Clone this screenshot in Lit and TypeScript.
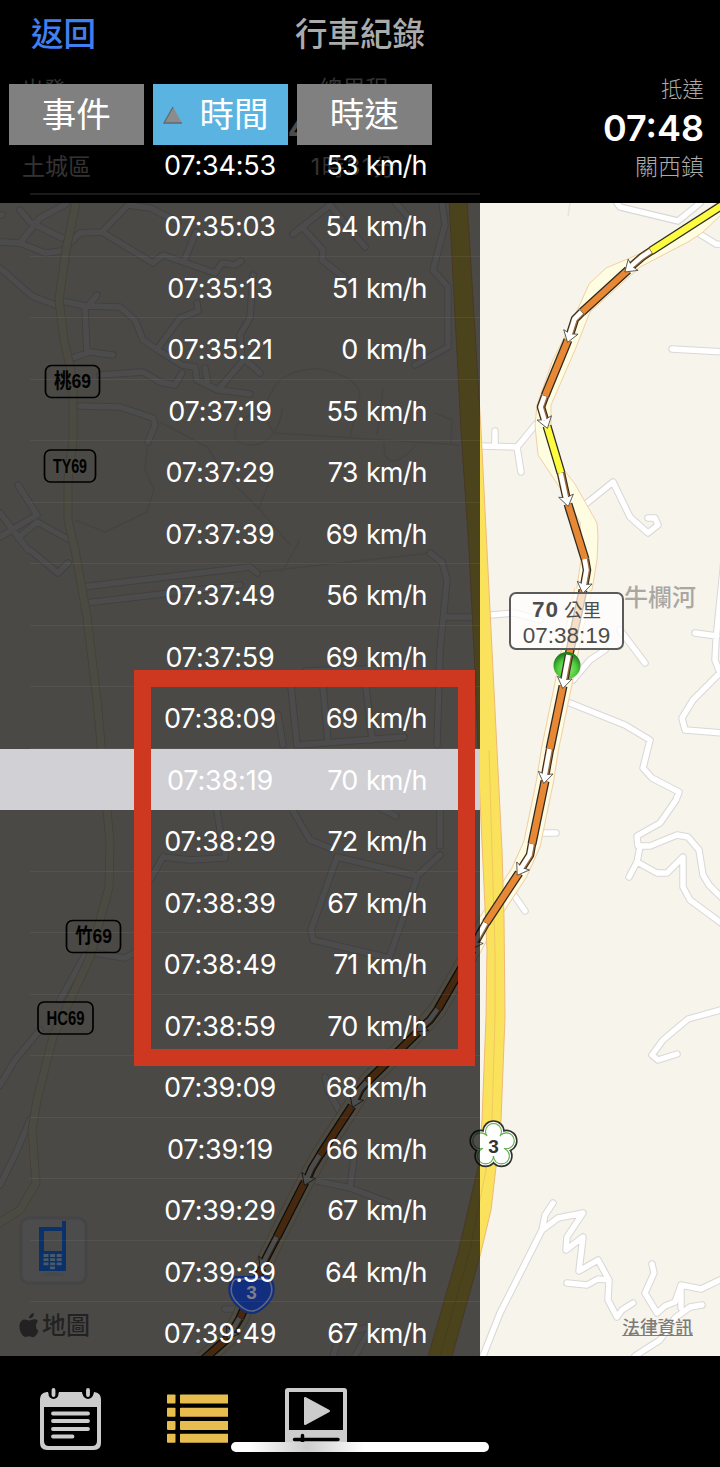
import { LitElement, html, svg, css } from 'lit';
import { customElement, property } from 'lit/decorators.js';
import { classMap } from 'lit/directives/class-map.js';

type Point = [number, number];

const SAMPLES = [
  { time: '07:34:53', speed: 53 },
  { time: '07:35:03', speed: 54 },
  { time: '07:35:13', speed: 51 },
  { time: '07:35:21', speed: 0 },
  { time: '07:37:19', speed: 55 },
  { time: '07:37:29', speed: 73 },
  { time: '07:37:39', speed: 69 },
  { time: '07:37:49', speed: 56 },
  { time: '07:37:59', speed: 69 },
  { time: '07:38:09', speed: 69 },
  { time: '07:38:19', speed: 70 },
  { time: '07:38:29', speed: 72 },
  { time: '07:38:39', speed: 67 },
  { time: '07:38:49', speed: 71 },
  { time: '07:38:59', speed: 70 },
  { time: '07:39:09', speed: 68 },
  { time: '07:39:19', speed: 66 },
  { time: '07:39:29', speed: 67 },
  { time: '07:39:39', speed: 64 },
  { time: '07:39:49', speed: 67 },
];

const STREETS = [
  'M0 242L20 243 45 253 62 251 80 233 102 232 153 263 163 255 215 273 222 263 235 265 241 261',
  'M102 232L128 205 150 208 178 222M196 232L185 259',
  'M20 210L30 222 62 238M66 204L40 218 20 243M0 215H2',
  'M0 268L32 296 58 306',
  'M62 301L85 306 120 307 135 320 143 340 158 350 182 365 195 367 197 380 218 390 235 392 250 394',
  'M88 306L97 295M85 307L87 352M72 358L90 352 113 355',
  'M158 348L180 318 198 311 197 303',
  'M253 275L250 318 240 335 242 357 260 373M242 362L218 390M205 368L208 384',
  'M100 375L143 372 160 382 175 385 182 373',
  'M80 406L120 407 153 418 155 425 148 442',
  'M293 234L330 205 365 247M303 228L323 250 322 260 345 278M396 203L415 225',
  'M442 203L445 225 433 270 448 287 448 347 415 365',
  'M18 485L37 515 0 537M18 538L37 522 70 540M0 513L28 550',
  'M30 550L58 573 68 563',
  'M82 587L250 567 257 573M85 603L240 585',
  'M430 553L442 562 447 580 440 650 437 745M447 617H472',
  'M291 687L297 745M323 687L328 742M366 687L372 740M297 745L404 737M278 715L283 745M306 671L400 668',
  'M293 811L310 840 330 848M380 808L396 816M440 770V846M217 811L222 842',
  'M150 880L163 857 190 860 225 858V845',
  'M337 857L417 876 440 855M337 857L311 930 313 940 389 958 417 878',
  'M95 953L125 958 140 950M85 955L60 1000M40 1030L15 1060 0 1085',
  'M325 1077L328 1090 340 1112',
  'M30 1120L15 1155 0 1185',
  'M313 1180L350 1188 390 1203M350 1188L355 1150M333 1356L340 1335 365 1328M355 1356L370 1330M225 1309H245',
  'M617 203L620 207 678 221 700 203M698 233L716 244 724 245M672 349L724 352',
  'M480 446L517 447 523 440 536 424M495 431V446M517 447L521 472',
  'M587 503L613 482 630 517 648 533 658 525 655 518 648 518',
  'M490 615L515 613 540 620M620 630L645 663M573 680L590 660 605 650',
  'M570 703L625 725 650 740 643 768 652 778 679 792 676 800 660 823 637 836 638 846 650 846 677 835 688 837 699 850 703 875 709 885 724 900',
  'M640 847L637 862 629 877M637 862L657 873 667 873 683 857 683 887 690 900 724 925',
  'M695 633L717 636M724 560L716 640 715 660 720 673 693 700 682 718 685 730 724 733',
  'M542 833H556M514 895L525 911',
  'M724 1009L688 1019 663 1040 652 1055 658 1060 677 1054',
  'M483 1356L500 1313 542 1230 558 1218 583 1213 567 1237 566 1250 583 1237 579 1271 598 1260 609 1280 608 1300 617 1317 622 1310 633 1303',
  'M542 1230L545 1215 553 1203M567 1283L587 1285 598 1279 609 1280',
  'M652 1264L654 1273 645 1293 657 1313 665 1306 675 1302 681 1285 686 1286 701 1289 724 1278M702 1305L690 1307 675 1318 660 1340 635 1356M681 1285V1308',
].join('');

const BOUNDARIES =
  'M160 422L207 447 225 475 260 510 290 545M275 433C262 420 262 400 280 380Q300 366 325 370 358 378 360 395L350 437M275 433L460 445M383 388L377 435M282 408Q282 425 268 440 250 450 236 440 230 425 250 415M148 442L145 470 154 490 147 512 105 532 75 520M384 443Q383 465 398 460 412 452 415 445M274 470L258 510M258 572L430 553M282 572L300 540M570 203L568 216M435 413L452 420 451 445';

const RURAL_ROAD: Point[] = [
  [76, 203], [66, 250], [59, 300], [64, 340], [73, 380], [73, 440], [68, 480], [68, 520],
  [75, 550], [87, 617], [97, 700], [110, 843], [109, 887], [90, 957], [53, 1037], [37, 1100],
  [32, 1130], [36, 1183], [20, 1210], [-4, 1225],
];

const HIGHWAY =
  'M449 200L461 430 469 550 475 670 480 800 487 950 486 1017 482 1120 478 1167 458 1253 427 1360 451 1360 480 1256 491 1210 496 1167 501 1120 505 1017 504 917 502 850 497 750 487 550 481 430 467 200Z';

const LANE = 'M489 750L495 950 495 1017 492 1120 486 1170 470 1250 440 1356';

const SHOULDER =
  'M724 198L651 249 606 268 589 284 572 322 552 362 537 405 535 425 538 455 560 488 580 522 581 560 575 600 592 590 597 560 598 537 597 523 575 484 560 465 551 425 551 405 575 350 590 312 640 267 688 242 702 233 724 212Z';

// legs driven at constant colour, then the white direction arrows between them
const LEGS: { tone: string; points: Point[] }[] = [
  { tone: 'fast', points: [[724, 204], [651, 251]] },
  { tone: 'slow', points: [[628, 270], [582, 312]] },
  { tone: 'slow', points: [[568, 340], [545, 396]] },
  { tone: 'fast', points: [[547, 426], [561, 473]] },
  { tone: 'slow', points: [[568, 504], [585, 559]] },
  { tone: 'slow', points: [[583, 590], [569, 655]] },
  { tone: 'slow', points: [[563, 686], [550, 749]] },
  { tone: 'slow', points: [[545, 781], [532, 844]] },
  { tone: 'slow', points: [[519, 873], [486, 923]] },
  { tone: 'slow', points: [[472, 950], [438, 1009]] },
  { tone: 'slow', points: [[418, 1032], [367, 1082]] },
  { tone: 'slow', points: [[352, 1106], [320, 1155]] },
  { tone: 'slow', points: [[305, 1182], [277, 1237]] },
  { tone: 'slow', points: [[262, 1268], [240, 1318]] },
  { tone: 'slow', points: [[228, 1338], [203, 1360]] },
];

const ARROWS: Point[][] = [
  [[651, 251], [642, 257], [626, 271]],
  [[582, 312], [575, 319], [568, 341]],
  [[545, 396], [541, 407], [547, 427]],
  [[561, 473], [568, 505]],
  [[585, 559], [587, 570], [583, 592]],
  [[569, 655], [563, 687]],
  [[550, 749], [544, 782]],
  [[532, 844], [530, 855], [518, 874]],
  [[486, 923], [472, 948]],
  [[438, 1009], [430, 1020], [417, 1031]],
  [[367, 1082], [360, 1090], [353, 1106]],
  [[320, 1155], [312, 1168], [305, 1184]],
  [[277, 1237], [261, 1268]],
  [[240, 1318], [228, 1338]],
];

const PETALS: Point[] = [-90, -18, 54, 126, 198].map(deg => {
  const rad = deg * Math.PI / 180;
  return [Math.cos(rad) * 13.5, Math.sin(rad) * 13.5];
});

const join = (points: Point[]) => points.map(p => p.join(',')).join(' ');

@customElement('trip-map')
export class TripMap extends LitElement {

  static styles = css`
    :host {
      display: block;
    }
    svg {
      display: block;
      width: 100%;
      height: 100%;
    }
    polyline, path {
      fill: none;
      stroke-linejoin: round;
    }
    .ground { fill: #f7f4ec; }
    .boundary { stroke: #e6e3dc; stroke-width: 1.5; }
    .street-edge { stroke: #dad8d6; stroke-width: 7.5; stroke-linecap: round; }
    .street { stroke: #fff; stroke-width: 5.4; stroke-linecap: round; }
    .rural-edge { stroke: #ecd9b4; stroke-width: 9; }
    .rural { stroke: #fffae0; stroke-width: 7; }
    .shoulder { fill: #fffde1; stroke: #f0cfa6; stroke-width: 1; }
    .shoulder-edge { stroke: #f0cfa6; stroke-width: 18; }
    .shoulder-line { stroke: #fffbe2; stroke-width: 16; }
    .highway { fill: #fae25d; stroke: #efb978; stroke-width: 1; }
    .lane { stroke: #edc35f; stroke-width: .8; }
    .leg-edge { stroke: #2d2a22; stroke-width: 9; }
    .leg { stroke-width: 6.4; }
    .fast { stroke: #fdfb40; }
    .slow { stroke: #e98834; }
    .tail-edge { stroke: #35291c; stroke-width: 8.5; }
    .tail-side { stroke: #9a6b3c; stroke-width: 6.4; }
    .tail { stroke: #fff; stroke-width: 4.6; }
    .head { fill: #fff; stroke: #444; stroke-width: .8; }
    .place { font: 500 24px "Noto Sans CJK TC", sans-serif; fill: #a9a7a3; }
    .road-sign { fill: none; stroke: #000; stroke-width: 1.7; }
    .road-name { font: 700 20px "Liberation Sans", "Noto Sans CJK TC", sans-serif; fill: #000; }
    .flower-edge { fill: #2e302e; }
    .flower-fill { fill: #fff; }
    .flower-line { fill: #5aaa45; }
    .route-no { font: 700 19px "Liberation Sans", sans-serif; fill: #333; text-anchor: middle; }
  `;

  renderArrow(points: Point[]) {
    const [tx, ty] = points[points.length - 1];
    const [px, py] = points[points.length - 2];
    const angle = Math.atan2(ty - py, tx - px) * 180 / Math.PI;
    const length = Math.hypot(tx - px, ty - py);
    // the tail stops short of the tip so that its dark edge stays behind the head
    const neck: Point = [tx - (tx - px) / length * 7, ty - (ty - py) / length * 7];
    const tail = join([...points.slice(0, -1), neck]);
    return svg`
      <polyline class="tail-edge" points=${tail} />
      <polyline class="tail-side" points=${tail} />
      <path class="head" d="M1.500 0L-9.500 -7.500 -7.500 0 -9.500 7.500Z" transform="translate(${tx} ${ty}) rotate(${angle})" />
      <polyline class="tail" points=${tail} transform="translate(-.5 0)" />
    `;
  }

  renderSign(x: number, y: number, width: number, text: string) {
    return svg`
      <rect class="road-sign" x=${x} y=${y} width=${width} height="32" rx="6" />
      <text class="road-name" x=${x + 8.5} y=${y + 22.7} textLength=${width - 17} lengthAdjust="spacingAndGlyphs">${text}</text>
    `;
  }

  renderPetals(name: string, radius: number) {
    return PETALS.map(([x, y]) => svg`<circle class=${name} cx=${x} cy=${y} r=${radius} />`);
  }

  render() {
    const track = join(LEGS.slice(5).flatMap(leg => leg.points));
    return html`
      <svg viewBox="0 203 720 1153" preserveAspectRatio="none">
        <rect class="ground" x="0" y="203" width="720" height="1153" />
        <path class="boundary" d=${BOUNDARIES} />
        <path class="street-edge" d=${STREETS} />
        <path class="street" d=${STREETS} />
        <polyline class="rural-edge" points=${join(RURAL_ROAD)} />
        <polyline class="rural" points=${join(RURAL_ROAD)} />
        <polyline class="shoulder-edge" points=${track} />
        <path class="shoulder" d=${SHOULDER} />
        <polyline class="shoulder-line" points=${track} />
        <path class="highway" d=${HIGHWAY} />
        <path class="lane" d=${LANE} />
        <text class="place" x="624" y="606">牛欄河</text>
        <defs>
          <radialGradient id="ball" cx=".5" cy=".65" r=".6">
            <stop offset="0" stop-color="#8ff07a" />
            <stop offset=".6" stop-color="#4fca3e" />
            <stop offset="1" stop-color="#1d7d1c" />
          </radialGradient>
        </defs>
        ${LEGS.map(leg => svg`
          <polyline class="leg-edge" points=${join(leg.points)} />
          <polyline class="leg ${leg.tone}" points=${join(leg.points)} />
        `)}
        <circle cx="567" cy="665.500" r="13.500" fill="url(#ball)" />
        ${ARROWS.map(points => this.renderArrow(points))}
        ${this.renderSign(45.5, 365.5, 54, '桃69')}
        ${this.renderSign(44.5, 450, 51, 'TY69')}
        ${this.renderSign(66.5, 920.5, 54, '竹69')}
        ${this.renderSign(38, 1002, 55, 'HC69')}
        <g transform="translate(493.500 1145)">
          ${this.renderPetals('flower-edge', 11.3)}
          ${this.renderPetals('flower-fill', 9.7)}
          ${this.renderPetals('flower-line', 8.5)}
          ${this.renderPetals('flower-fill', 7.4)}
          <circle class="flower-fill" r="11" />
          <text class="route-no" y="7.500">3</text>
        </g>
      </svg>
    `;
  }
}

// landmarks that stay readable through the translucent sample list
@customElement('map-landmarks')
export class MapLandmarks extends LitElement {

  static styles = css`
    :host {
      display: block;
    }
    svg {
      display: block;
      width: 100%;
      height: 100%;
    }
    .button { fill: #4d4c4c; stroke: #454547; stroke-width: 3; }
    .phone { fill: #0a3169; }
    .screen { fill: #4b4a4a; }
    .keys { stroke: #4a5a6a; stroke-width: 2.8; stroke-dasharray: 5 1.6; fill: none; }
    .glow { fill: #46494d; }
    .shield { fill: #122e7e; }
    .shield-line { fill: none; stroke: #5f6680; stroke-width: 1.6; }
    .route-no { font: 700 19px "Liberation Sans", sans-serif; fill: #7c7f8a; text-anchor: middle; }
    .apple { fill: #232222; }
    .brand { font: 500 24px "Noto Sans CJK TC", sans-serif; fill: #232222; }
  `;

  render() {
    return html`
      <svg viewBox="0 1200 480 156">
        <rect class="button" x="21" y="1218" width="65" height="65" rx="8" />
        <path class="phone" d="M39 1227H62V1221H66V1271H39Z" />
        <rect class="screen" x="44" y="1231" width="18" height="20" />
        <path class="keys" d="M43.500 1255.500H62M43.500 1259.700H62M43.500 1263.900H62M50 1267.800H55" />
        <path class="glow" d="M39 1276Q46 1272 52 1272T66 1276Z" />
        <g transform="translate(251.500 1294)">
          <path class="shield" d="M-15 -18H15Q20 -18 22 -12 26 0 17 10 8 20 0 20 -8 20 -17 10 -26 0 -22 -12 -20 -18 -15 -18Z" />
          <path class="shield-line" d="M-14 -15H14Q18 -15 19 -11 23 -1 15 8 7 17 0 17 -7 17 -15 8 -23 -1 -19 -11 -18 -15 -14 -15Z" />
          <text class="route-no" y="5">3</text>
        </g>
        <path class="apple" d="M29 1318.500Q29 1314 34 1313 34 1318 29 1318.500ZM29 1320.500C32 1320.500 35 1317.500 38 1321Q33.500 1326.500 38.500 1331 35.500 1338 32 1337 29 1335.500 26 1337C21.500 1337.500 17.500 1327 20.500 1322 24 1317.500 27 1320.500 29 1320.500Z" />
        <text class="brand" x="42" y="1334">地圖</text>
      </svg>
    `;
  }
}

@customElement('sample-row')
export class SampleRow extends LitElement {

  @property() time = '';
  @property({ type: Number }) speed = 0;

  static styles = css`
    :host {
      display: block;
    }
    .row {
      display: flex;
      align-items: center;
      box-sizing: border-box;
      height: 61.53px;
      padding-top: 1.5px;
      color: #fff;
      font: 27px/1 Inter, sans-serif;
      white-space: nowrap;
    }
    .time {
      width: 132px;
      margin-left: 154px;
      text-align: center;
      letter-spacing: -.2px;
    }
    .speed {
      width: 140.5px;
      text-align: right;
      letter-spacing: -.9px;
      word-spacing: 1.8px;
    }
  `;

  render() {
    return html`
      <div class="row">
        <span class="time">${this.time}</span>
        <span class="speed">${this.speed} km/h</span>
      </div>
    `;
  }
}

@customElement('app-root')
export class AppRoot extends LitElement {

  @property() selected = '07:38:19';
  @property() sortBy = '時間';

  static styles = css`
    :host {
      display: block;
      font-family: Inter, "Noto Sans CJK TC", sans-serif;
    }
    .screen {
      position: relative;
      display: flex;
      flex-direction: column;
      width: 720px;
      height: 1467px;
      overflow: hidden;
      background: #000;
    }
    .header {
      height: 203px;
      color: #ababab;
    }
    .nav {
      display: grid;
      grid-template-columns: 1fr auto 1fr;
      align-items: center;
      box-sizing: border-box;
      height: 68px;
      padding: 2px 31px 0;
      font-size: 32.5px;
      font-weight: 500;
      line-height: 1;
    }
    .back {
      color: #427fee;
    }
    .summary {
      display: grid;
      grid-template-columns: 252px 160px 1fr;
      padding: 9px 16px 0 22px;
      font-size: 23px;
    }
    .stop {
      display: flex;
      flex-direction: column;
    }
    .stop span {
      height: 24px;
      line-height: 24px;
    }
    .stop .small {
      font-size: 21.5px;
    }
    .middle {
      align-items: center;
    }
    .end {
      align-items: flex-end;
      font-weight: 300;
    }
    .stop .figure {
      height: 54px;
      color: #fff;
      font-size: 36px;
      font-weight: 600;
      line-height: 54px;
      white-space: nowrap;
    }
    .stop .spell {
      letter-spacing: 1.5px;
    }
    .figure small {
      font-size: 22px;
    }
    .map {
      flex: none;
      height: 1153px;
    }
    .shade {
      position: absolute;
      left: 0;
      top: 72px;
      width: 480px;
      height: 1284px;
      background: rgba(0, 0, 0, .7);
    }
    .landmarks {
      position: absolute;
      left: 0;
      top: 1200px;
      width: 480px;
      height: 156px;
    }
    .panel {
      position: absolute;
      left: 0;
      top: 84px;
      width: 480px;
      height: 1272px;
      overflow: hidden;
    }
    .tabs {
      position: relative;
      display: flex;
      gap: 9.5px;
      height: 61px;
      padding-left: 9px;
    }
    .tab {
      display: flex;
      align-items: center;
      justify-content: center;
      box-sizing: border-box;
      width: 134.500px;
      padding-top: 2px;
      background: #808080;
      color: #fff;
      font-size: 34.5px;
      line-height: 1;
    }
    .tab.active {
      justify-content: space-between;
      padding: 2px 19px 0 10px;
      background: #5ab3e0;
    }
    .tab svg {
      width: 20px;
      height: 18px;
      margin-top: -2px;
    }
    .rows {
      margin-top: -11.5px;
    }
    .entry {
      position: relative;
      height: 61.53px;
    }
    .entry::after {
      content: "";
      position: absolute;
      left: 30px;
      right: 0;
      bottom: 0;
      height: 1px;
      background: rgba(255, 255, 255, .06);
    }
    .entry:first-child::after {
      height: 2px;
      background: rgba(255, 255, 255, .1);
    }
    .entry.selected {
      background: #d1d0d5;
    }
    .entry.selected::after {
      display: none;
    }
    .frame {
      position: absolute;
      left: 133.5px;
      top: 670px;
      box-sizing: border-box;
      width: 341.500px;
      height: 396px;
      border: 17px solid #cf3820;
    }
    .callout {
      position: absolute;
      left: 509px;
      top: 592px;
      display: flex;
      flex-direction: column;
      align-items: center;
      justify-content: center;
      box-sizing: border-box;
      width: 115px;
      height: 58px;
      padding-top: 2px;
      border: 2px solid #5a5a5a;
      border-radius: 7px;
      background: rgba(255, 255, 255, .72);
      color: #4c4c4c;
      font: 22.5px/25px "Liberation Sans", "Noto Sans CJK TC", sans-serif;
    }
    .callout .distance {
      font-size: 18.5px;
    }
    .callout b {
      font: 700 22.5px/25px "Liberation Sans", sans-serif;
      letter-spacing: 1px;
    }
    .legal {
      position: absolute;
      right: 27px;
      top: 1315px;
      color: #7d7b78;
      font-size: 17.7px;
      font-weight: 500;
      line-height: 26px;
      text-decoration: underline;
    }
    .toolbar {
      display: flex;
      gap: 59.5px;
      padding: 31px 0 0 39px;
    }
    .toolbar svg {
      width: 63px;
      height: 64px;
    }
    .toolbar svg.current {
      margin-left: 3px;
      margin-right: -3px;
    }
    .home {
      position: absolute;
      left: 231px;
      top: 1442px;
      width: 258px;
      height: 10px;
      border-radius: 5px;
      background: radial-gradient(circle 58px at 76px 5px, #ccc, #fff);
    }
  `;

  renderTab(label: string) {
    const active = label === this.sortBy;
    return html`
      <div class=${classMap({ tab: true, active })}>
        ${active ? html`
          <svg viewBox="0 0 20 18">
            <path d="M10 1L19 17H1Z" fill="#8c8c8c" />
            <path d="M10 1L1 17H19" fill="none" stroke="#626a6e" stroke-width="1.300" />
          </svg>` : ''}
        <span>${label}</span>
      </div>
    `;
  }

  renderToolbar() {
    return html`
      <div class="toolbar">
        <svg viewBox="0 0 63 64">
          <path fill="#ccc" fill-rule="evenodd" d="M8 5H9A6 6 0 0 0 20 5H43A6 6 0 0 0 55 5Q62 6 62 12V56Q62 63 55 63H8Q1 63 1 56V12Q1 6 8 5ZM5 20V54Q5 59 10 59H53Q58 59 58 54V20Z" />
          <path stroke="#000" stroke-width="10" stroke-linecap="round" d="M14.500 5V7M49 5V7" />
          <path stroke="#ccc" stroke-width="3.800" stroke-linecap="round" d="M14.500 3V8M49 3V8M14 26.500H49M14 34H49M14 42H49M14 49.500H33.500" />
        </svg>
        <svg class="current" viewBox="0 0 63 64">
          <g fill="#e8bd50">
            ${[7.5, 20.7, 33.9, 46.8].map(y => svg`
              <rect x="2" y=${y} width="8.500" height="9" rx=".8" />
              <rect x="15" y=${y} width="48.500" height="9" rx=".8" />
            `)}
          </g>
        </svg>
        <svg viewBox="0 0 63 64">
          <path fill="#ccc" fill-rule="evenodd" d="M4 1H60Q63 1 63 4V60H1V4Q1 1 4 1ZM5 5V43H59V5Z" />
          <path fill="#ccc" stroke="#ccc" stroke-width="2" stroke-linejoin="round" d="M21 11V37L45 24Z" />
          <path stroke="#000" stroke-width="3.500" stroke-linecap="round" d="M10.500 52.500H54M18.500 48.500V58" />
        </svg>
      </div>
    `;
  }

  render() {
    return html`
      <div class="screen">
        <div class="header">
          <div class="nav">
            <span class="back">返回</span>
            <span>行車紀錄</span>
          </div>
          <div class="summary">
            <div class="stop">
              <span class="small">出發</span>
              <span class="figure"></span>
              <span>土城區</span>
            </div>
            <div class="stop middle">
              <span>總里程</span>
              <span class="figure">46.9 <small>公里</small></span>
              <span class="spell">1時31分</span>
            </div>
            <div class="stop end">
              <span class="small">抵達</span>
              <span class="figure">07:48</span>
              <span>關西鎮</span>
            </div>
          </div>
        </div>
        <trip-map class="map"></trip-map>
        ${this.renderToolbar()}
        <div class="shade"></div>
        <map-landmarks class="landmarks"></map-landmarks>
        <div class="panel">
          <div class="tabs">
            ${['事件', '時間', '時速'].map(label => this.renderTab(label))}
          </div>
          <div class="rows">
            ${SAMPLES.map(s => html`
              <div class=${classMap({ entry: true, selected: s.time === this.selected })}>
                <sample-row .time=${s.time} .speed=${s.speed}></sample-row>
              </div>
            `)}
          </div>
        </div>
        <div class="callout">
          <span class="distance"><b>70</b> 公里</span>
          <span>07:38:19</span>
        </div>
        <span class="legal">法律資訊</span>
        <div class="frame"></div>
        <div class="home"></div>
      </div>
    `;
  }
}
